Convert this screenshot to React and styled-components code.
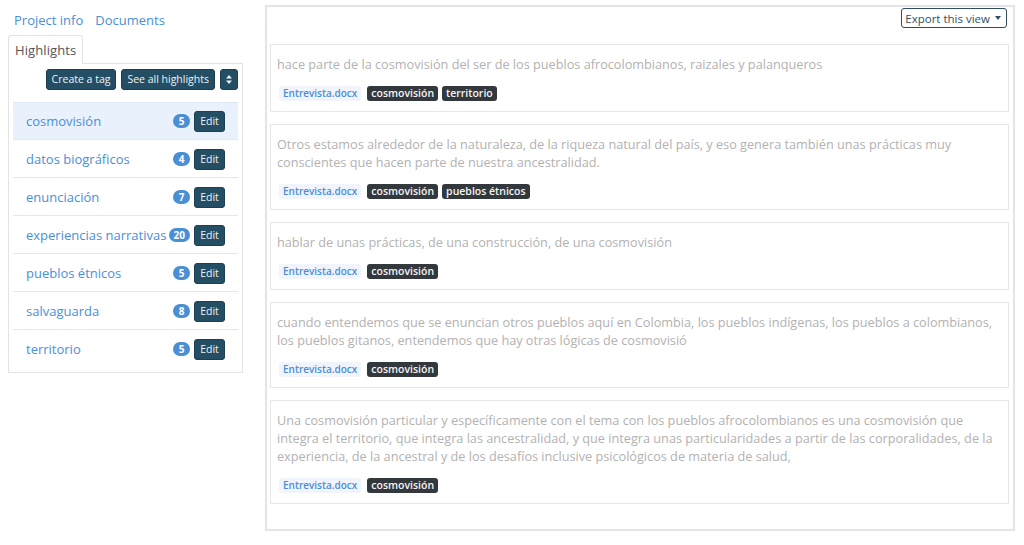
import styled, { createGlobalStyle } from 'styled-components';

const GlobalStyle = createGlobalStyle`
  body {
    margin: 0;
    font-family: "Open Sans", "Liberation Sans", sans-serif;
    background: #ffffff;
  }
`;

const tags = [
  { name: 'cosmovisión', count: 5, active: true },
  { name: 'datos biográficos', count: 4 },
  { name: 'enunciación', count: 7 },
  { name: 'experiencias narrativas', count: 20 },
  { name: 'pueblos étnicos', count: 5 },
  { name: 'salvaguarda', count: 8 },
  { name: 'territorio', count: 5 },
];

const highlights = [
  {
    text: 'hace parte de la cosmovisión del ser de los pueblos afrocolombianos, raizales y palanqueros',
    tags: ['cosmovisión', 'territorio'],
  },
  {
    text: 'Otros estamos alrededor de la naturaleza, de la riqueza natural del país, y eso genera también unas prácticas muy conscientes que hacen parte de nuestra ancestralidad.',
    tags: ['cosmovisión', 'pueblos étnicos'],
  },
  {
    text: 'hablar de unas prácticas, de una construcción, de una cosmovisión',
    tags: ['cosmovisión'],
  },
  {
    text: 'cuando entendemos que se enuncian otros pueblos aquí en Colombia, los pueblos indígenas, los pueblos a colombianos, los pueblos gitanos, entendemos que hay otras lógicas de cosmovisió',
    tags: ['cosmovisión'],
  },
  {
    text: 'Una cosmovisión particular y específicamente con el tema con los pueblos afrocolombianos es una cosmovisión que integra el territorio, que integra las ancestralidad, y que integra unas particularidades a partir de las corporalidades, de la experiencia, de la ancestral y de los desafíos inclusive psicológicos de materia de salud,',
    tags: ['cosmovisión'],
  },
];

const Page = styled.div`
  display: flex;
  align-items: flex-start;
  gap: 22px;
  padding: 5px 9px 15px 8px;
`;

const Sidebar = styled.aside`
  width: 235px;
  flex-shrink: 0;
`;

const NavLinks = styled.nav`
  display: flex;
  gap: 12px;
  padding: 6px 6px 6px;
`;

const NavLink = styled.a`
  font-size: 13px;
  color: #4a8fd6;
  text-decoration: none;
  line-height: 18px;
  cursor: pointer;
`;

const Tabs = styled.div`
  display: flex;
`;

const Tab = styled.div`
  font-size: 13px;
  letter-spacing: 0.1px;
  color: #555;
  line-height: 18px;
  padding: 5px 6px;
  border: 1px solid #e3e3e3;
  border-bottom: none;
  border-radius: 3px 3px 0 0;
  background: #fff;
  margin-bottom: -1px;
  position: relative;
`;

const Panel = styled.div`
  border: 1px solid #e3e3e3;
  padding: 5px 4px 4px;
`;

const Toolbar = styled.div`
  display: flex;
  justify-content: flex-end;
  gap: 5px;
  margin-bottom: 12px;
`;

const DarkButton = styled.button`
  font-family: inherit;
  font-size: 10.5px;
  line-height: 15px;
  height: 21px;
  padding: 0 5px;
  color: #eef3f6;
  background: #244e64;
  border: 1px solid #1c3f52;
  border-radius: 3px;
  display: inline-flex;
  align-items: center;
  justify-content: center;
  cursor: pointer;
`;

const TagList = styled.ul`
  list-style: none;
  margin: 0;
  padding: 0;
`;

const TagRow = styled.li`
  display: flex;
  align-items: center;
  height: 38px;
  box-sizing: border-box;
  padding: 0 13px;
  border-bottom: 1px solid ${(p) => (p.$last ? 'transparent' : '#e7e7e7')};
  border-top: 1px solid ${(p) => (p.$active ? '#dde7f5' : 'transparent')};
  background: ${(p) => (p.$active ? '#e9f1fd' : '#fff')};
`;

const TagName = styled.span`
  flex: 1;
  font-size: 13px;
  color: #4a8fd6;
  white-space: nowrap;
`;

const CountBadge = styled.span`
  font-size: 10px;
  font-weight: 700;
  color: #fff;
  background: #4a8fd6;
  border-radius: 8px;
  line-height: 14px;
  padding: 0 5px;
  margin-right: 4px;
  min-width: 7px;
  text-align: center;
`;

const EditButton = styled(DarkButton)`
  width: 31px;
  padding: 0;
`;

const Content = styled.main`
  flex: 1;
  border: 2px solid #e4e5ec;
  padding: 1px 4px 25px 3px;
  box-sizing: border-box;
`;

const ContentHeader = styled.div`
  display: flex;
  justify-content: flex-end;
  height: 20px;
  padding-right: 2px;
  margin-bottom: 16px;
`;

const ExportButton = styled.button`
  font-family: inherit;
  font-size: 11.5px;
  color: #33505f;
  background: #fff;
  border: 1px solid #2f4e5e;
  border-radius: 3px;
  height: 20px;
  padding: 0 5px 0 3px;
  display: inline-flex;
  align-items: center;
  gap: 5px;
  cursor: pointer;
`;

const Caret = styled.span`
  width: 0;
  height: 0;
  border-left: 3px solid transparent;
  border-right: 3px solid transparent;
  border-top: 4px solid #33505f;
`;

const Card = styled.article`
  border: 1px solid #e6e6e6;
  padding: 10px 6px 10px;
  margin-bottom: 12px;
  &:last-child {
    margin-bottom: 0;
  }
`;

const Quote = styled.p`
  margin: 0 0 13px;
  font-size: 12.7px;
  line-height: 18px;
  color: #b2b2b2;
`;

const ChipRow = styled.div`
  display: flex;
  gap: 4px;
  align-items: center;
  padding-left: 2px;
`;

const Chip = styled.span`
  font-size: ${(p) => (p.$file ? '10px' : '10.5px')};
  font-weight: 600;
  line-height: 15px;
  padding: 0 4px;
  border-radius: 3px;
  color: ${(p) => (p.$file ? '#4a8fd6' : '#f4f4f4')};
  background: ${(p) => (p.$file ? '#f1f5fb' : '#33383d')};
  margin-right: ${(p) => (p.$file ? '2px' : '0')};
`;

function SortIcon() {
  return (
    <svg width="6" height="9" viewBox="0 0 6 9">
      <path d="M3 0 L6 3.5 H0 Z M3 9 L0 5.5 H6 Z" fill="#eef3f6" />
    </svg>
  );
}

export default function App() {
  return (
    <>
      <GlobalStyle />
      <Page>
        <Sidebar>
          <NavLinks>
            <NavLink>Project info</NavLink>
            <NavLink>Documents</NavLink>
          </NavLinks>
          <Tabs>
            <Tab>Highlights</Tab>
          </Tabs>
          <Panel>
            <Toolbar>
              <DarkButton>Create a tag</DarkButton>
              <DarkButton>See all highlights</DarkButton>
              <DarkButton>
                <SortIcon />
              </DarkButton>
            </Toolbar>
            <TagList>
              {tags.map((t, i) => (
                <TagRow key={t.name} $active={t.active} $last={i === tags.length - 1}>
                  <TagName>{t.name}</TagName>
                  <CountBadge>{t.count}</CountBadge>
                  <EditButton>Edit</EditButton>
                </TagRow>
              ))}
            </TagList>
          </Panel>
        </Sidebar>
        <Content>
          <ContentHeader>
            <ExportButton>
              Export this view <Caret />
            </ExportButton>
          </ContentHeader>
          {highlights.map((h, i) => (
            <Card key={i}>
              <Quote>{h.text}</Quote>
              <ChipRow>
                <Chip $file>Entrevista.docx</Chip>
                {h.tags.map((t) => (
                  <Chip key={t}>{t}</Chip>
                ))}
              </ChipRow>
            </Card>
          ))}
        </Content>
      </Page>
    </>
  );
}
